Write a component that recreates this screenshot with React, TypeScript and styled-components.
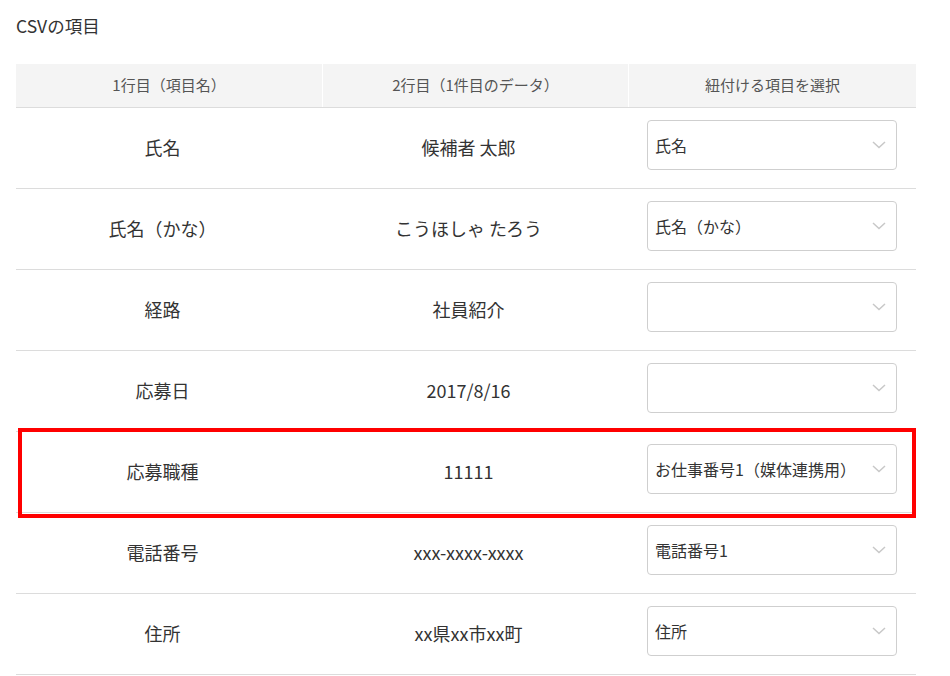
import React, { FunctionComponent } from "react";
import styled, { createGlobalStyle } from "styled-components";

interface Row {
    name: string;
    sample: string;
    mapped: string;
    highlight?: boolean;
}

const rows: Row[] = [
    { name: "氏名", sample: "候補者 太郎", mapped: "氏名" },
    { name: "氏名（かな）", sample: "こうほしゃ たろう", mapped: "氏名（かな）" },
    { name: "経路", sample: "社員紹介", mapped: "" },
    { name: "応募日", sample: "2017/8/16", mapped: "" },
    { name: "応募職種", sample: "11111", mapped: "お仕事番号1（媒体連携用）", highlight: true },
    { name: "電話番号", sample: "xxx-xxxx-xxxx", mapped: "電話番号1" },
    { name: "住所", sample: "xx県xx市xx町", mapped: "住所" },
];

const Chevron = () => (
    <svg width="14" height="8" viewBox="0 0 14 8" fill="none">
        <path d="M1 1l6 5.5L13 1" stroke="#c8c8c8" strokeWidth="1.5" />
    </svg>
);

const App: FunctionComponent = () => {
    return (
        <>
            <GlobalStyle />
            <Page>
                <Title>CSVの項目</Title>
                <Table>
                    <HeadRow>
                        <HeadCell>1行目（項目名）</HeadCell>
                        <HeadCell>2行目（1件目のデータ）</HeadCell>
                        <HeadCell>紐付ける項目を選択</HeadCell>
                    </HeadRow>
                    {rows.map((r) => (
                        <BodyRow key={r.name} $highlight={r.highlight}>
                            <Cell>{r.name}</Cell>
                            <Cell>{r.sample}</Cell>
                            <SelectCell>
                                <SelectBox>
                                    <span>{r.mapped}</span>
                                    <Chevron />
                                </SelectBox>
                            </SelectCell>
                        </BodyRow>
                    ))}
                </Table>
            </Page>
        </>
    );
};

export default App;

const GlobalStyle = createGlobalStyle`
    body {
        margin: 0;
        background: #fff;
        font-family: "Noto Sans CJK JP", "Noto Sans", sans-serif;
        color: #333;
    }
`;

const Page = styled.div`
    padding: 13px 34px 0 16px;
`;

const Title = styled.div`
    font-size: 17.5px;
    line-height: 26px;
    color: #333;
    margin-bottom: 25px;
`;

const Table = styled.div`
    width: 900px;
`;

const HeadRow = styled.div`
    display: grid;
    grid-template-columns: 306px 306px 288px;
    border-bottom: 1px solid #dcdcdc;
`;

const HeadCell = styled.div`
    background: #f4f4f4;
    height: 43px;
    box-sizing: border-box;
    padding-bottom: 3px;
    display: flex;
    align-items: center;
    justify-content: center;
    font-size: 15px;
    color: #555;
    border-left: 1px solid #fff;

    &:first-child {
        border-left: none;
    }
`;

const BodyRow = styled.div<{ $highlight?: boolean }>`
    position: relative;
    display: grid;
    grid-template-columns: 306px 306px 288px;
    height: 80px;
    border-bottom: 1px solid #dcdcdc;

    ${(p) =>
        p.$highlight &&
        `
        &::after {
            content: "";
            position: absolute;
            left: 2px;
            right: 0;
            top: -4px;
            bottom: -6px;
            border: 4px solid #ff0000;
            pointer-events: none;
        }
    `}
`;

const Cell = styled.div`
    display: flex;
    align-items: center;
    justify-content: center;
    padding: 0 13px 3px 0;
    font-size: 18px;
    color: #333;
`;

const SelectCell = styled.div`
    display: flex;
    align-items: center;
    padding: 0 19px 7px 19px;
`;

const SelectBox = styled.div`
    width: 250px;
    height: 50px;
    box-sizing: border-box;
    border: 1px solid #cfcfcf;
    border-radius: 4px;
    background: #fff;
    display: flex;
    align-items: center;
    justify-content: space-between;
    padding: 0 10px 0 7px;
    font-size: 16px;
    color: #333;
`;
